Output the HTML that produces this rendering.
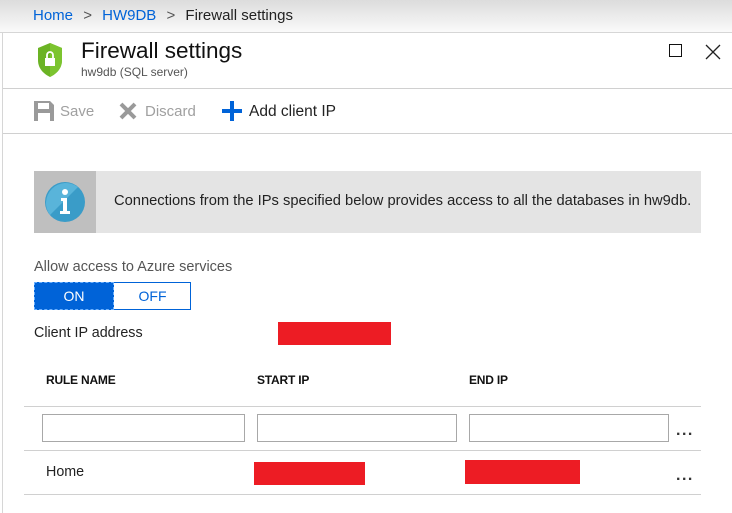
<!DOCTYPE html>
<html><head><style>
body{margin:0;width:732px;height:513px;overflow:hidden;background:#fff;font-family:"Segoe UI","Liberation Sans",sans-serif;position:relative}
.a{position:absolute;white-space:nowrap}
.ln{position:absolute;height:1px;background:#d0d0d0}
.inp{position:absolute;top:414px;height:28px;border:1px solid #a8a8a8;box-sizing:border-box}
.red{position:absolute;background:#ed1c24}
.dots{position:absolute;font-size:16px;color:#333;letter-spacing:1.5px;font-weight:bold}
</style></head><body>
<div class="a" style="left:0;top:0;width:732px;height:32px;background:linear-gradient(#dcdcdc,#fafafa)"></div>
<div class="ln" style="left:0;top:32px;width:732px;background:#d6d6d6"></div>
<div class="a" style="left:33px;top:7px;font-size:15px;color:#0063d8">Home <span style="color:#555;margin:0 6px">&gt;</span> HW9DB <span style="color:#555;margin:0 6px">&gt;</span> <span style="color:#222">Firewall settings</span></div>
<div class="a" style="left:2px;top:33px;width:1px;height:480px;background:#d6d6d6"></div>
<svg class="a" style="left:37px;top:42px" width="26" height="36" viewBox="0 0 26 36"><path d="M13 1 L25 6 V18 C25 27 19 32 13 35 C7 32 1 27 1 18 V6 Z" fill="#6bb324"/><path d="M13 1 L25 6 V18 C25 27 19 32 13 35Z" fill="#7cc42f"/><rect x="8" y="16" width="10" height="8" fill="#fff"/><path d="M10 16 V13 a3 3 0 0 1 6 0 V16" stroke="#fff" stroke-width="1.8" fill="none"/></svg>
<div class="a" style="left:81px;top:38px;font-size:22.5px;color:#111">Firewall settings</div>
<div class="a" style="left:81px;top:65px;font-size:12px;color:#555">hw9db (SQL server)</div>
<div class="a" style="left:669px;top:44px;width:13px;height:13px;border:1.3px solid #111;box-sizing:border-box"></div>
<svg class="a" style="left:705px;top:44px" width="16" height="16"><path d="M1 1L15 15M15 1L1 15" stroke="#222" stroke-width="1.3"/></svg>
<div class="ln" style="left:3px;top:88px;width:729px"></div>
<svg class="a" style="left:34px;top:101px" width="20" height="20" viewBox="0 0 20 20"><path d="M0 0H16L20 4V20H0Z" fill="#9a9a9a"/><rect x="4" y="2" width="11" height="6" fill="#fff"/><rect x="4" y="12" width="12" height="8" fill="#fff"/></svg>
<div class="a" style="left:60px;top:103px;font-size:15px;color:#a0a0a0">Save</div>
<svg class="a" style="left:119px;top:102px" width="18" height="18"><path d="M2 2L16 16M16 2L2 16" stroke="#9a9a9a" stroke-width="4"/></svg>
<div class="a" style="left:145px;top:103px;font-size:15px;color:#a0a0a0">Discard</div>
<svg class="a" style="left:222px;top:101px" width="20" height="20"><path d="M10 0V20M0 10H20" stroke="#0063d8" stroke-width="4"/></svg>
<div class="a" style="left:249px;top:103px;font-size:15.5px;color:#222">Add client IP</div>
<div class="ln" style="left:3px;top:133px;width:729px"></div>
<div class="a" style="left:34px;top:171px;width:62px;height:62px;background:#bfbfbf"></div>
<div class="a" style="left:96px;top:171px;width:605px;height:62px;background:#e4e4e4"></div>
<svg class="a" style="left:44px;top:181px" width="42" height="42" viewBox="0 0 42 42"><circle cx="21" cy="21" r="20" fill="#3a9cc8"/><path d="M6 34 A20 20 0 0 1 34 6Z" fill="#59b4da"/><circle cx="21" cy="11" r="3" fill="#fff"/><path d="M17 17H23V30H26V33H16V30H19V20H17Z" fill="#fff"/></svg>
<div class="a" style="left:114px;top:193px;font-size:14.7px;color:#222">Connections from the IPs specified below provides access to all the databases in hw9db.</div>
<div class="a" style="left:34px;top:259px;font-size:14.5px;color:#555">Allow access to Azure services</div>
<div class="a" style="left:34px;top:282px;width:157px;height:28px;border:1px solid #0063d8;box-sizing:border-box"></div>
<div class="a" style="left:34px;top:282px;width:80px;height:28px;background:#0063d8;border:1px dashed #6ab0ff;box-sizing:border-box;color:#fff;font-size:14px;text-align:center;line-height:27px">ON</div>
<div class="a" style="left:114px;top:282px;width:77px;height:28px;color:#0063d8;font-size:14px;text-align:center;line-height:29px">OFF</div>
<div class="a" style="left:34px;top:325px;font-size:14.3px;color:#222">Client IP address</div>
<div class="red" style="left:278px;top:322px;width:113px;height:23px"></div>
<div class="a" style="left:46px;top:373px;font-size:12px;font-weight:bold;color:#111;letter-spacing:-0.2px">RULE NAME</div>
<div class="a" style="left:257px;top:373px;font-size:12px;font-weight:bold;color:#111;letter-spacing:-0.2px">START IP</div>
<div class="a" style="left:469px;top:373px;font-size:12px;font-weight:bold;color:#111;letter-spacing:-0.2px">END IP</div>
<div class="ln" style="left:24px;top:406px;width:677px"></div>
<div class="inp" style="left:42px;width:203px"></div>
<div class="inp" style="left:257px;width:200px"></div>
<div class="inp" style="left:469px;width:200px"></div>
<div class="dots" style="left:676px;top:422px">...</div>
<div class="ln" style="left:24px;top:450px;width:677px"></div>
<div class="a" style="left:46px;top:464px;font-size:14.3px;color:#222">Home</div>
<div class="red" style="left:254px;top:462px;width:111px;height:23px"></div>
<div class="red" style="left:465px;top:460px;width:115px;height:24px"></div>
<div class="dots" style="left:676px;top:467px">...</div>
<div class="ln" style="left:24px;top:494px;width:677px"></div>
</body></html>
